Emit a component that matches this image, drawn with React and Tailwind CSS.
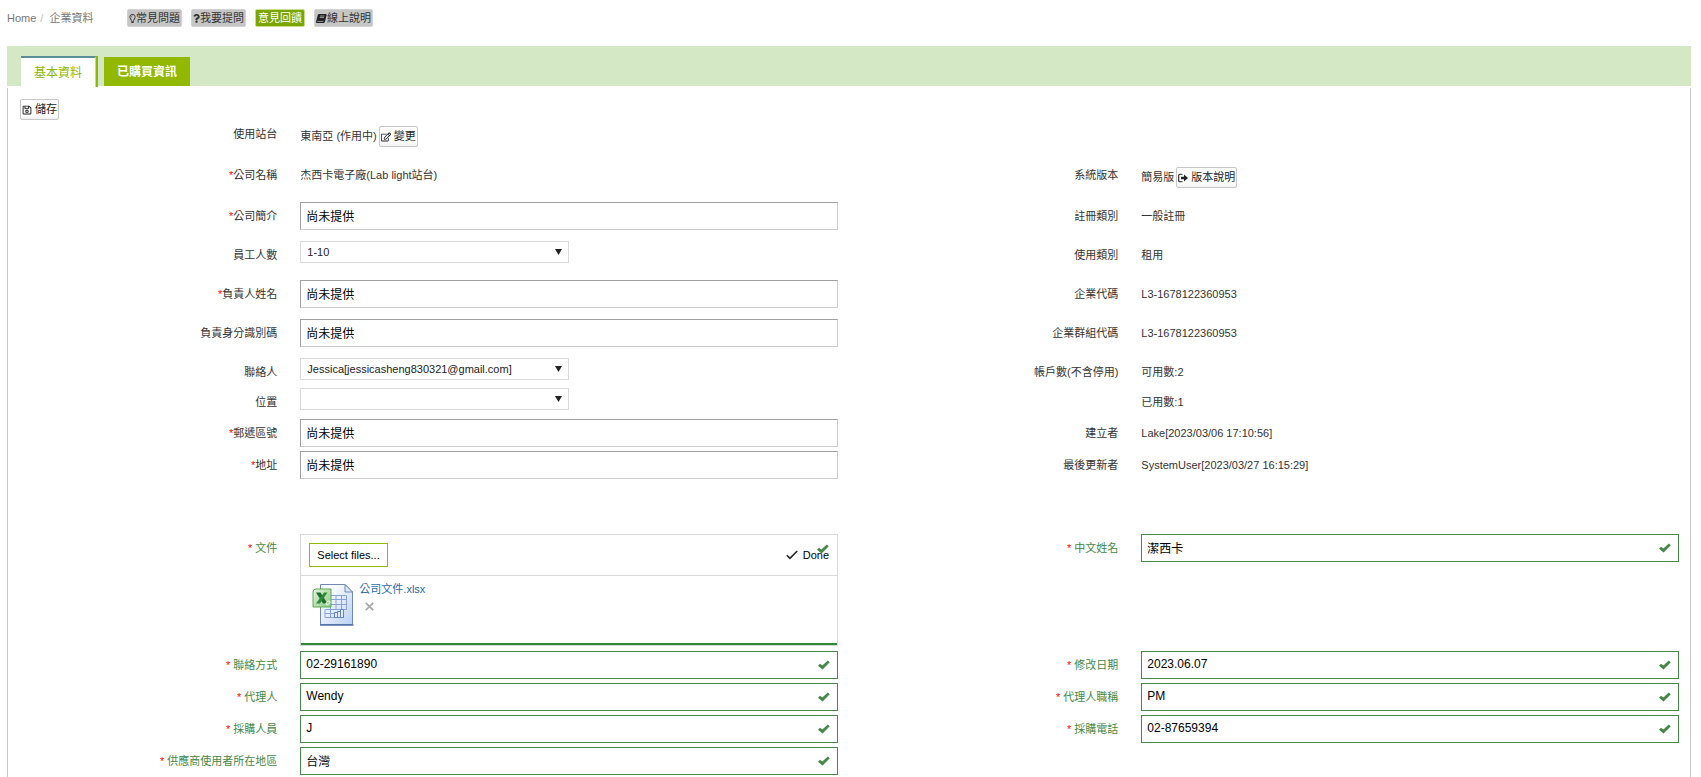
import clsx from 'clsx'
import { FaQuestion, FaRegEdit, FaRegLightbulb, FaRegSave } from 'react-icons/fa'

const helpLinks = [
  { label: '常見問題', icon: FaRegLightbulb, iconClass: 'h-[9px] w-[7px]' },
  { label: '我要提問', icon: FaQuestion, iconClass: 'h-[9px] w-[7px]' },
  { label: '意見回饋', active: true },
  { label: '線上說明', icon: BookIcon, iconClass: 'h-[9px] w-[11px]' },
]

function BookIcon({ className }) {
  return (
    <svg viewBox="0 0 11 9" className={className}>
      <path
        d="M3.2 0h6.3c.9 0 1.3.5 1.1 1.3L8.9 7.8C8.7 8.6 8.1 9 7.3 9H1.2C.3 9-.1 8.4.1 7.6L1.8 1.1C2 .4 2.5 0 3.2 0z"
        fill="#222"
      />
      <path d="M4.1 2h4.3M3.7 3.5H8M1.3 7.4h6.1" stroke="#c6c6c6" strokeWidth="0.7" />
    </svg>
  )
}

function SignOutIcon({ className }) {
  return (
    <svg viewBox="0 0 10 10" className={className}>
      <path d="M4.5 1.2H2c-.8 0-1.3.5-1.3 1.3v5c0 .8.5 1.3 1.3 1.3h2.5" fill="none" stroke="#222" strokeWidth="1.1" />
      <path d="M3 3.7h3V1.5L10 5 6 8.5V6.3H3z" fill="#222" />
    </svg>
  )
}

// Heavy tick shown at the right end of a valid field
function ValidMark() {
  return (
    <svg viewBox="0 0 12 10" className="absolute top-[9px] right-2 h-[10px] w-3">
      <path d="M0 5.8L2 3.8L4.4 5.6L9.8 0.4L11.8 2.2L4.6 9.6z" fill="#468847" />
    </svg>
  )
}

function SmallButton({ icon: Icon, children }) {
  return (
    <button
      type="button"
      className="flex h-[21px] items-center gap-[3px] rounded-xs border border-[#c8c8c8] bg-linear-to-b from-white from-80% to-[#f0f0f0] px-px text-[11px] text-[#222]"
    >
      <Icon className="size-[10px]" />
      {children}
    </button>
  )
}

function Row({ size = 'normal', children }) {
  return (
    <div
      className={clsx('grid grid-cols-2', {
        'min-h-[41px]': size === 'loose',
        'min-h-[39px]': size === 'normal',
        'min-h-[30px]': size === 'tight',
        'min-h-[31px]': size === 'select',
        'min-h-8': size === 'input',
        'min-h-[83px]': size === 'last',
        'min-h-[117px]': size === 'upload',
      })}
    >
      {children}
    </div>
  )
}

function Field({ id, label, required, valid, children }) {
  const Tag = id ? 'label' : 'span'
  return (
    <div className="grid grid-cols-3 items-start">
      <Tag
        htmlFor={id}
        className={clsx('pr-[11px] pl-3 text-right leading-7', valid ? 'text-[#468847]' : 'text-[#333]')}
      >
        {required && <span className="text-[#f00]">{valid ? '* ' : '*'}</span>}
        {label}
      </Tag>
      <div className="col-span-2 pr-[11px] pl-3">{children}</div>
    </div>
  )
}

function Value({ children }) {
  return <p className="leading-7 text-[#333]">{children}</p>
}

function TextInput({ id, value }) {
  return (
    <input
      id={id}
      type="text"
      defaultValue={value}
      className="block h-7 w-full border border-[#ccc] border-t-[#a0a0a0] border-l-[#a0a0a0] px-[5px] pb-[2px] text-xs text-black"
    />
  )
}

function ValidInput({ id, value }) {
  return (
    <div className="relative">
      <input
        id={id}
        type="text"
        defaultValue={value}
        className="block h-7 w-full border border-[#468847] pr-8 pb-[2px] pl-[5px] text-xs text-black"
      />
      <ValidMark />
    </div>
  )
}

function SelectBox({ id, value }) {
  return (
    <div className="relative w-1/2">
      <select
        id={id}
        defaultValue={value}
        className="block h-[22px] w-full appearance-none border border-[#d9d9d9] bg-white px-[6px] text-[11px] text-[#222]"
      >
        <option>{value}</option>
      </select>
      <svg viewBox="0 0 7 6" className="pointer-events-none absolute top-2 right-[7px] h-[6px] w-[7px]">
        <path d="M0 0h7L3.5 6z" fill="#222" />
      </svg>
    </div>
  )
}

function ExcelIcon() {
  return (
    <svg viewBox="0 0 42 42" className="size-[42px] shrink-0">
      <defs>
        <linearGradient id="sheet" x1="0" y1="0" x2="1" y2="1">
          <stop offset="0.2" stopColor="#fdfeff" />
          <stop offset="1" stopColor="#b9d0f7" />
        </linearGradient>
        <linearGradient id="badge" x1="0" y1="0" x2="1" y2="1">
          <stop offset="0" stopColor="#e4f3df" />
          <stop offset="1" stopColor="#8ecb84" />
        </linearGradient>
      </defs>
      <path d="M8.5 0.5H33L40.5 8V40.5H8.5z" fill="url(#sheet)" stroke="#7389b5" />
      <path d="M8 41h33.5" stroke="#4e6ca6" strokeWidth="1.5" />
      <path d="M33 0.5V8H40.5z" fill="#dbe6f8" stroke="#7389b5" />
      <path
        d="M18.5 11.5h16v14h-16zM18.5 15.5h16M18.5 20.5h16M24 11.5v14M29.5 11.5v14M13 25.5h19M13 29.5h10M13 33.5h19M13 25.5v8M18.5 25.5v8"
        fill="none"
        stroke="#86a4da"
      />
      <path d="M22.5 33.5v-5h3v5zM25.5 33.5v-6h3v6zM28.5 33.5v-8h3v8z" fill="#e6eefc" stroke="#5f83c6" />
      <path d="M4 5h15v18H1V8a3 3 0 0 1 3-3z" fill="url(#badge)" stroke="#5cab54" />
      <path d="M4 8.5h4.5l7 11H11z" fill="#1e6f2c" />
      <path d="M12 8.5h3.5L8 19.5H4z" fill="#2f8a3c" />
      <path d="M14 20c0-3 4-4 4-2s-3 3-4 2z" fill="none" stroke="#fff" />
    </svg>
  )
}

function UploadBox() {
  return (
    <div className="relative h-28 border border-[#d9d9d9]">
      <div className="flex h-[41px] items-center justify-between border-b border-[#d9d9d9] px-2">
        <button
          id="file"
          type="button"
          className="h-6 border border-[#8ebc00] px-[7px] text-[11px] text-black"
        >
          Select files...
        </button>
        <span className="flex items-center gap-[5px] text-[11px] text-black">
          <svg viewBox="0 0 12 10" className="h-[10px] w-3">
            <path d="M0.8 5.2L4 8.4L11.2 1" fill="none" stroke="#222" strokeWidth="1.6" />
          </svg>
          Done
        </span>
      </div>
      <div className="flex gap-[5px] px-[11px] pt-2">
        <ExcelIcon />
        <div>
          <a href="#file" className="block leading-[10px] text-[#2a6ea9]">
            公司文件.xlsx
          </a>
          <button type="button" aria-label="Remove" className="ml-[6px] block pt-2">
            <svg viewBox="0 0 9 9" className="size-[9px]">
              <path d="M0.8 0.8l7.4 7.4M8.2 0.8l-7.4 7.4" stroke="#aaa" strokeWidth="1.7" />
            </svg>
          </button>
        </div>
      </div>
      <ValidMark />
      <div className="absolute inset-x-0 bottom-0 h-[2px] bg-[#2b893c]" />
    </div>
  )
}

export default function App() {
  return (
    <div className="min-h-screen bg-white pr-[10px] pl-[7px] font-['Liberation_Sans','Noto_Sans_CJK_TC',sans-serif] text-[11px] text-[#333]">
      {/* Breadcrumb and help links */}
      <header className="flex h-[46px] items-start pt-[9px]">
        <nav className="flex w-[120px] gap-1 leading-[18px] text-[#777]">
          <a href="#home">Home</a>
          <span className="text-[#bbb]">/</span>
          <span className="pl-[2px]">企業資料</span>
        </nav>
        <div className="flex gap-[9px]">
          {helpLinks.map(({ label, icon: Icon, iconClass, active }) => (
            <button
              key={label}
              type="button"
              className={clsx(
                'flex h-[18px] items-center rounded-xs border whitespace-nowrap',
                active
                  ? 'border-[#c6dd8a] bg-[#7ba600] px-[2px] text-white'
                  : 'border-[#d2d2d2] bg-[#c6c6c6] px-px text-[#333]'
              )}
            >
              {Icon && <Icon className={iconClass} />}
              {label}
            </button>
          ))}
        </div>
      </header>

      {/* Tabs */}
      <div role="tablist" className="mb-[2px] flex h-10 items-end gap-[6px] bg-[#d5e8c6] pl-[14px]">
        <button
          role="tab"
          aria-selected="true"
          type="button"
          className="-mb-px h-[31px] border-r-2 border-[#8fb800] bg-white text-xs text-[#8fb800]"
        >
          <span className="flex h-[31px] items-center border-t-2 border-r border-t-[#5b8d9c] border-r-[#ccc] px-[13px]">
            基本資料
          </span>
        </button>
        <button
          role="tab"
          aria-selected="false"
          type="button"
          className="h-[29px] bg-[#92b900] px-[13px] text-xs font-bold text-white"
        >
          已購買資訊
        </button>
      </div>

      <main className="border-x border-[#c8c8c8]">
        <div className="flex h-8 items-start px-3 pt-[11px]">
          <SmallButton icon={FaRegSave}>儲存</SmallButton>
        </div>

        <form>
          <Row size="loose">
            <Field label="使用站台">
              <div className="flex items-center gap-[2px] pt-[6px]">
                東南亞 (作用中)
                <SmallButton icon={FaRegEdit}>變更</SmallButton>
              </div>
            </Field>
          </Row>
          <Row size="loose">
            <Field label="公司名稱" required>
              <Value>杰西卡電子廠(Lab light站台)</Value>
            </Field>
            <Field label="系統版本">
              <div className="flex items-center gap-[2px] pt-[6px]">
                簡易版
                <SmallButton icon={SignOutIcon}>版本說明</SmallButton>
              </div>
            </Field>
          </Row>
          <Row>
            <Field id="intro" label="公司簡介" required>
              <TextInput id="intro" value="尚未提供" />
            </Field>
            <Field label="註冊類別">
              <Value>一般註冊</Value>
            </Field>
          </Row>
          <Row>
            <Field id="employees" label="員工人數">
              <SelectBox id="employees" value="1-10" />
            </Field>
            <Field label="使用類別">
              <Value>租用</Value>
            </Field>
          </Row>
          <Row>
            <Field id="owner" label="負責人姓名" required>
              <TextInput id="owner" value="尚未提供" />
            </Field>
            <Field label="企業代碼">
              <Value>L3-1678122360953</Value>
            </Field>
          </Row>
          <Row>
            <Field id="owner-id" label="負責身分識別碼">
              <TextInput id="owner-id" value="尚未提供" />
            </Field>
            <Field label="企業群組代碼">
              <Value>L3-1678122360953</Value>
            </Field>
          </Row>
          <Row size="tight">
            <Field id="contact" label="聯絡人">
              <SelectBox id="contact" value="Jessica[jessicasheng830321@gmail.com]" />
            </Field>
            <Field label="帳戶數(不含停用)">
              <Value>可用數:2</Value>
            </Field>
          </Row>
          <Row size="select">
            <Field id="location" label="位置">
              <SelectBox id="location" value="" />
            </Field>
            <Field>
              <Value>已用數:1</Value>
            </Field>
          </Row>
          <Row size="input">
            <Field id="zip" label="郵遞區號" required>
              <TextInput id="zip" value="尚未提供" />
            </Field>
            <Field label="建立者">
              <Value>Lake[2023/03/06 17:10:56]</Value>
            </Field>
          </Row>
          <Row size="last">
            <Field id="address" label="地址" required>
              <TextInput id="address" value="尚未提供" />
            </Field>
            <Field label="最後更新者">
              <Value>SystemUser[2023/03/27 16:15:29]</Value>
            </Field>
          </Row>

          {/* Custom fields */}
          <Row size="upload">
            <Field id="file" label="文件" required valid>
              <UploadBox />
            </Field>
            <Field id="name-zh" label="中文姓名" required valid>
              <ValidInput id="name-zh" value="潔西卡" />
            </Field>
          </Row>
          <Row size="input">
            <Field id="phone" label="聯絡方式" required valid>
              <ValidInput id="phone" value="02-29161890" />
            </Field>
            <Field id="modified" label="修改日期" required valid>
              <ValidInput id="modified" value="2023.06.07" />
            </Field>
          </Row>
          <Row size="input">
            <Field id="agent" label="代理人" required valid>
              <ValidInput id="agent" value="Wendy" />
            </Field>
            <Field id="agent-title" label="代理人職稱" required valid>
              <ValidInput id="agent-title" value="PM" />
            </Field>
          </Row>
          <Row size="input">
            <Field id="buyer" label="採購人員" required valid>
              <ValidInput id="buyer" value="J" />
            </Field>
            <Field id="buyer-phone" label="採購電話" required valid>
              <ValidInput id="buyer-phone" value="02-87659394" />
            </Field>
          </Row>
          <Row size="tight">
            <Field id="region" label="供應商使用者所在地區" required valid>
              <ValidInput id="region" value="台灣" />
            </Field>
          </Row>
        </form>
      </main>
    </div>
  )
}
